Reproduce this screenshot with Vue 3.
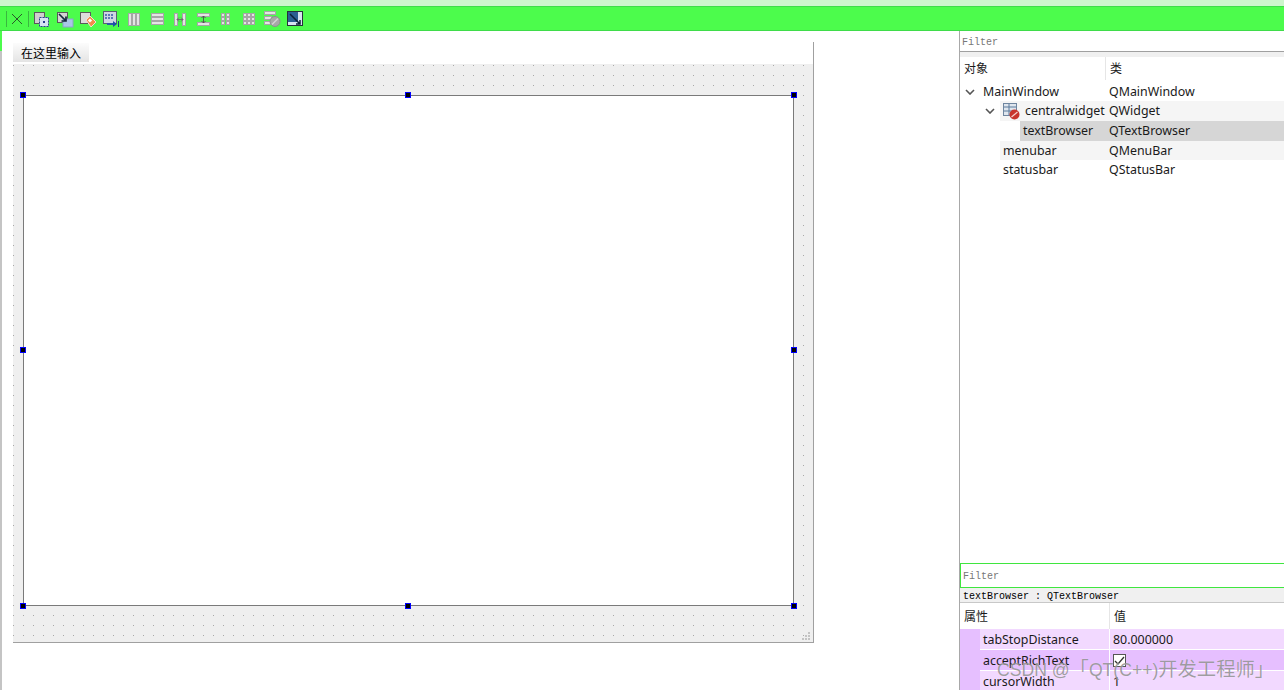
<template>
  <div class="designer">
    <div class="top-strip"></div>
    <div class="toolbar">
      <span class="sep first"></span>
      <svg class="close-ic" width="12" height="12" viewBox="0 0 12 12">
        <path d="M1 1 11 11M11 1 1 11" stroke="#2a5a2a" stroke-width="1" fill="none" />
      </svg>
      <span class="sep"></span>
      <div class="tools">
        <!-- edit widgets -->
        <svg viewBox="0 0 18 18">
          <rect x="1.5" y="1.5" width="10" height="11" fill="#cfcfcf" stroke="#5a5a5a" />
          <rect x="6.5" y="6.5" width="9" height="9" fill="#d7e4f5" stroke="#2a3f8f" stroke-dasharray="2 1" />
          <rect x="10" y="10" width="2" height="2" fill="#2a3f8f" />
        </svg>
        <!-- signals / slots -->
        <svg viewBox="0 0 18 18">
          <rect x="1.5" y="1.5" width="10" height="10" fill="#d4d4d4" stroke="#5a5a5a" />
          <rect x="7" y="8" width="10" height="8" fill="#a9c6e8" stroke="#8aa6c8" />
          <path d="M3 3 10 10M10 5.5V10H5.5" stroke="#12263a" stroke-width="1.7" fill="none" />
        </svg>
        <!-- buddies -->
        <svg viewBox="0 0 18 18">
          <rect x="1.5" y="1.5" width="10" height="11" fill="#dcdcdc" stroke="#5a5a5a" />
          <path d="M7 9 11 5 17 11 12 16Z" fill="#f58a4a" stroke="#eee2d2" />
          <rect x="9.5" y="8" width="3" height="3" fill="#fff" transform="rotate(45 11 9.5)" />
        </svg>
        <!-- tab order -->
        <svg viewBox="0 0 18 18">
          <rect x="1.5" y="0.5" width="13" height="12" fill="#cfd6e4" stroke="#5a6070" />
          <path d="M3 4H12M3 7H12" stroke="#3a5aa8" stroke-width="1.5" stroke-dasharray="2 1" />
          <path d="M5 13H13" stroke="#2a5aa8" stroke-width="2" />
          <path d="M11 10 15 13 11 16Z" fill="#1d4fa8" />
          <path d="M16.5 10V16" stroke="#1d3f88" />
        </svg>
        <!-- layout horizontally -->
        <svg viewBox="0 0 18 18">
          <g fill="#e4e4e4" stroke="#a6a6a6">
            <rect x="3.5" y="2.5" width="3" height="12" />
            <rect x="7.5" y="2.5" width="3" height="12" />
            <rect x="11.5" y="2.5" width="3" height="12" />
          </g>
        </svg>
        <!-- layout vertically -->
        <svg viewBox="0 0 18 18">
          <g fill="#e4e4e4" stroke="#a6a6a6">
            <rect x="3.5" y="2.5" width="12" height="3" />
            <rect x="3.5" y="6.5" width="12" height="3" />
            <rect x="3.5" y="10.5" width="12" height="3" />
          </g>
        </svg>
        <!-- split horizontally -->
        <svg viewBox="0 0 18 18">
          <g fill="#e4e4e4" stroke="#a6a6a6">
            <rect x="3.5" y="2.5" width="3" height="12" />
            <rect x="11.5" y="2.5" width="3" height="12" />
          </g>
          <path d="M6 8.5H12M8 6.5 6 8.5 8 10.5M10 6.5 12 8.5 10 10.5" stroke="#6a6a6a" fill="none" />
        </svg>
        <!-- split vertically -->
        <svg viewBox="0 0 18 18">
          <g fill="#e4e4e4" stroke="#a6a6a6">
            <rect x="3.5" y="2.5" width="12" height="3" />
            <rect x="3.5" y="11.5" width="12" height="3" />
          </g>
          <path d="M9.5 5V12M7.5 7 9.5 5 11.5 7M7.5 10 9.5 12 11.5 10" stroke="#555" fill="none" />
        </svg>
        <!-- form layout -->
        <svg viewBox="0 0 18 18">
          <g fill="#e4e4e4" stroke="#a6a6a6">
            <rect x="4.5" y="2.5" width="3" height="3" />
            <rect x="9.5" y="2.5" width="3" height="3" />
            <rect x="4.5" y="6.5" width="3" height="3" />
            <rect x="9.5" y="6.5" width="3" height="3" />
            <rect x="4.5" y="10.5" width="3" height="3" />
            <rect x="9.5" y="10.5" width="3" height="3" />
          </g>
        </svg>
        <!-- grid layout -->
        <svg viewBox="0 0 18 18">
          <g fill="#e4e4e4" stroke="#a6a6a6">
            <rect x="3.5" y="2.5" width="3" height="3" />
            <rect x="7.5" y="2.5" width="3" height="3" />
            <rect x="11.5" y="2.5" width="3" height="3" />
            <rect x="3.5" y="6.5" width="3" height="3" />
            <rect x="7.5" y="6.5" width="3" height="3" />
            <rect x="11.5" y="6.5" width="3" height="3" />
            <rect x="3.5" y="10.5" width="3" height="3" />
            <rect x="7.5" y="10.5" width="3" height="3" />
            <rect x="11.5" y="10.5" width="3" height="3" />
          </g>
        </svg>
        <!-- break layout -->
        <svg viewBox="0 0 18 18">
          <g fill="#e4e4e4" stroke="#a6a6a6">
            <rect x="1.5" y="0.5" width="11" height="3" />
            <rect x="1.5" y="5.5" width="7" height="3" />
            <rect x="1.5" y="10.5" width="6" height="3" />
          </g>
          <circle cx="12" cy="10.5" r="5" fill="#a8a8a8" stroke="#8e8e8e" />
          <path d="M9 13.5 15 7.5" stroke="#d4d4d4" stroke-width="1.5" />
        </svg>
        <!-- adjust size -->
        <svg viewBox="0 0 18 18">
          <rect x="1.5" y="0.5" width="15" height="14" fill="#d6e4f0" stroke="#26303a" />
          <rect x="2" y="1" width="10" height="10" fill="#2b5f92" />
          <path d="M4 3 14 13M14 9V13H10" stroke="#0c2238" stroke-width="1.5" fill="none" />
        </svg>
      </div>
    </div>

    <div class="workspace">
      <div class="form-area">
        <div class="form">
          <div class="menubar">
            <span class="menu-chip">在这里输入</span>
          </div>
          <div class="canvas">
            <div class="browser">
              <i v-for="h in handles" :key="h" class="handle" :class="h"></i>
            </div>
            <span class="grip">
              <svg width="8" height="8" viewBox="0 0 8 8">
                <path d="M6 0h2v2H6zM3 3h2v2H3zM6 3h2v2H6zM0 6h2v2H0zM3 6h2v2H3zM6 6h2v2H6z" fill="#c4c4c4" />
              </svg>
            </span>
          </div>
        </div>
      </div>

      <aside class="side">
        <div class="filter top-filter">Filter</div>
        <div class="grey-gap"></div>
        <div class="head-row tree-grid">
          <span class="cell-a">对象</span>
          <span class="cell-b">类</span>
        </div>
        <div class="tree">
          <div v-for="row in objects" :key="row.name" class="tree-row tree-grid" :class="row.cls">
            <span class="cell-a">
              <svg v-if="row.open" class="caret" width="10" height="6" viewBox="0 0 10 6">
                <path d="M1 1 5 5 9 1" stroke="#555" stroke-width="1.6" fill="none" />
              </svg>
              <svg v-if="row.icon" class="widget-ic" width="17" height="17" viewBox="0 0 17 17">
                <rect x="0.5" y="0.5" width="13" height="12" fill="#dfe6ee" stroke="#6f86a0" />
                <path d="M1 4H13M1 8H13M6 1V12" stroke="#5b7a9c" />
                <circle cx="11.5" cy="11.5" r="5" fill="#c8342c" />
                <path d="M8.5 14 14.5 9" stroke="#f3d0cc" stroke-width="1.2" />
              </svg>
              <span class="name">{{ row.name }}</span>
            </span>
            <span class="cell-b">{{ row.type }}</span>
          </div>
        </div>
        <div class="spacer"></div>
        <div class="filter active-filter">Filter</div>
        <div class="class-name">textBrowser : QTextBrowser</div>
        <div class="head-row prop-grid">
          <span class="cell-a">属性</span>
          <span class="cell-b">值</span>
        </div>
        <div v-for="p in props" :key="p.name" class="prop-row prop-grid" :class="{ dark: p.dark }">
          <span class="prop-name">{{ p.name }}</span>
          <span class="prop-val">
            <span v-if="p.check" class="check">
              <svg width="13" height="13" viewBox="0 0 13 13">
                <path d="M2 7 5 10 11 3" stroke="#333" stroke-width="1.3" fill="none" />
              </svg>
            </span>
            <template v-else>{{ p.value }}</template>
          </span>
        </div>
      </aside>
    </div>
    <div class="watermark">CSDN @<span class="wm-cjk">「</span>QT(C++)<span class="wm-cjk">开发工程师」</span></div>
  </div>
</template>

<script setup>
const handles = ['tl', 'tc', 'tr', 'ml', 'mr', 'bl', 'bc', 'br']

const objects = [
  { name: 'MainWindow', type: 'QMainWindow', open: true, cls: 'lv0' },
  { name: 'centralwidget', type: 'QWidget', open: true, icon: true, cls: 'lv1 alt' },
  { name: 'textBrowser', type: 'QTextBrowser', cls: 'lv2 current' },
  { name: 'menubar', type: 'QMenuBar', cls: 'lv3 alt' },
  { name: 'statusbar', type: 'QStatusBar', cls: 'lv3' }
]

const props = [
  { name: 'tabStopDistance', value: '80.000000' },
  { name: 'acceptRichText', check: true, dark: true },
  { name: 'cursorWidth', value: '1' }
]
</script>

<style>
html, body {
  margin: 0;
  overflow: hidden;
  background: #fff;
}
</style>

<style scoped>
.designer {
  position: relative;
  width: 1284px;
  height: 690px;
  overflow: hidden;
  display: flex;
  flex-direction: column;
  font-family: "Noto Sans", "Noto Sans CJK SC", sans-serif;
  font-size: 12.4px;
  color: #1a1a1a;
}
.top-strip {
  height: 6px;
  flex: none;
  background: #cdf6cd;
}
.toolbar {
  height: 25px;
  flex: none;
  display: flex;
  align-items: center;
  background: #4cfc4c;
  border-top: 1px solid #3fdc4a;
  border-bottom: 1px solid #3fdc4a;
  box-sizing: border-box;
}
.sep {
  width: 1px;
  height: 16px;
  background: #39b83f;
  margin-left: 5px;
}
.sep.first {
  margin-left: 6px;
}
.close-ic {
  margin-left: 4px;
}
.tools {
  display: flex;
  margin: 3px 0 0 1px;
}
.tools svg {
  width: 18px;
  height: 18px;
  padding: 0 2px 0 3px;
  flex: none;
  filter: blur(.3px);
}
.workspace {
  flex: 1;
  display: flex;
  min-height: 0;
}
.form-area {
  width: 959px;
  flex: none;
  padding: 11px 0 0 11px;
  box-sizing: border-box;
  border-left: 2px solid #c4c4c4;
  border-image: linear-gradient(#4cfc4c 21px, #c4c4c4 21px) 1;
}
.form {
  width: 801px;
  height: 601px;
  box-sizing: border-box;
  display: flex;
  flex-direction: column;
  border-right: 1px solid #a0a0a0;
  border-bottom: 1px solid #a0a0a0;
}
.menubar {
  height: 22px;
  flex: none;
  padding-top: 1px;
  box-sizing: border-box;
}
.menu-chip {
  display: block;
  width: 76px;
  height: 19px;
  line-height: 21px;
  padding-left: 8px;
  box-sizing: border-box;
  font-size: 12px;
  color: #000;
  background: linear-gradient(#fcfcfc, #e4e4e4);
}
.canvas {
  flex: 1;
  position: relative;
  padding: 31px 19px 36px 10px;
  background-color: #a9a9a9;
  background-image:
    linear-gradient(#efefef 9px, transparent 9px),
    linear-gradient(90deg, #efefef 9px, transparent 9px);
  background-size: 10px 10px;
  background-position: 1px 2px;
}
.browser {
  position: relative;
  height: 100%;
  box-sizing: border-box;
  background: #fff;
  border: 1px solid #7a7a7a;
}
.handle {
  position: absolute;
  width: 6px;
  height: 6px;
  box-sizing: border-box;
  background: #000;
  border: 1px solid #0000ff;
}
.tl, .ml, .bl { left: -4px; }
.tc, .bc { left: calc(50% - 4px); }
.tr, .mr, .br { right: -4px; }
.tl, .tc, .tr { top: -4px; }
.ml, .mr { top: calc(50% - 4px); }
.bl, .bc, .br { bottom: -4px; }
.grip {
  position: absolute;
  right: 3px;
  bottom: 2px;
  width: 8px;
  height: 8px;
  display: flex;
}
.side {
  flex: 1;
  min-width: 0;
  display: flex;
  flex-direction: column;
  border-left: 1px solid #a8a8a8;
  background: #fff;
}
.filter {
  font-family: "Liberation Mono", monospace;
  font-size: 10px;
  color: #777;
  background: #fff;
  box-sizing: border-box;
  padding-left: 2px;
}
.top-filter {
  height: 21px;
  line-height: 24px;
  border-bottom: 1px solid #a0a0a0;
}
.grey-gap {
  height: 5px;
  background: #f0f0f0;
}
.head-row {
  height: 25px;
  line-height: 24px;
  font-size: 12px;
}
.tree-grid {
  display: grid;
  grid-template-columns: 145px 1fr;
}
.head-row.tree-grid .cell-a,
.head-row.tree-grid .cell-b {
  padding-left: 4px;
  height: 23px;
}
.head-row .cell-b {
  border-left: 1px solid #e6e6e6;
}
.tree-row {
  height: 19px;
  line-height: 19px;
}
.tree-row:nth-child(2),
.tree-row:nth-child(3) {
  height: 20px;
  line-height: 20px;
}
.tree-row .cell-a {
  display: flex;
  align-items: center;
  white-space: nowrap;
}
.tree-row .cell-b {
  padding-left: 4px;
}
.caret {
  flex: none;
}
.lv0 .cell-a { padding-left: 5px; }
.lv0 .name { margin-left: 8px; }
.lv1 .cell-a { padding-left: 25px; }
.lv1 .widget-ic { flex: none; margin-left: 8px; margin-right: 5px; }
.lv2 .cell-a { padding-left: 63px; }
.lv3 .cell-a { padding-left: 43px; }
.alt {
  background: linear-gradient(90deg, transparent 40px, #f5f5f5 40px);
}
.current {
  background: linear-gradient(90deg, transparent 60px, #d6d6d6 60px);
}
.spacer {
  flex: 1;
}
.active-filter {
  height: 25px;
  line-height: 27px;
  box-shadow: inset 0 0 0 1px #3fe63f;
  margin-right: -1px;
  padding-left: 3px;
}
.class-name {
  height: 15px;
  line-height: 17px;
  font-family: "Liberation Mono", monospace;
  font-size: 10px;
  padding-left: 3px;
  color: #000;
  background: #f0f0f0;
  border-bottom: 1px solid #c8c8c8;
  box-sizing: border-box;
}
.prop-grid {
  display: grid;
  grid-template-columns: 149px 1fr;
}
.head-row.prop-grid {
  height: 26px;
  line-height: 27px;
}
.head-row.prop-grid .cell-a,
.head-row.prop-grid .cell-b {
  padding-left: 4px;
}
.prop-row {
  height: 21px;
  line-height: 21px;
  background: #f2d9ff;
  border-bottom: 1px solid #fff;
  box-sizing: border-box;
}
.prop-row:last-child {
  height: 19px;
  border-bottom: 0;
}
.prop-row.dark {
  background: #e6bfff;
}
.prop-name {
  padding-left: 23px;
  background: linear-gradient(90deg, #e6bfff 20px, transparent 20px);
}
.prop-val {
  padding-left: 3px;
  border-left: 1px solid #fff;
}
.check {
  display: block;
  width: 13px;
  height: 13px;
  margin-top: 4px;
  background: #fff;
  border: 1px solid #555;
  box-sizing: border-box;
}
.check svg {
  display: block;
  margin: -1px;
}
.watermark {
  position: absolute;
  left: 997px;
  top: 655px;
  font-size: 17.6px;
  line-height: 30px;
  white-space: nowrap;
  font-family: "Liberation Sans", "Noto Sans CJK SC", sans-serif;
  color: rgba(130, 130, 130, .75);
  text-shadow: 0 0 1px rgba(255, 255, 255, .6);
}
.wm-cjk {
  font-size: 19.3px;
}
</style>
